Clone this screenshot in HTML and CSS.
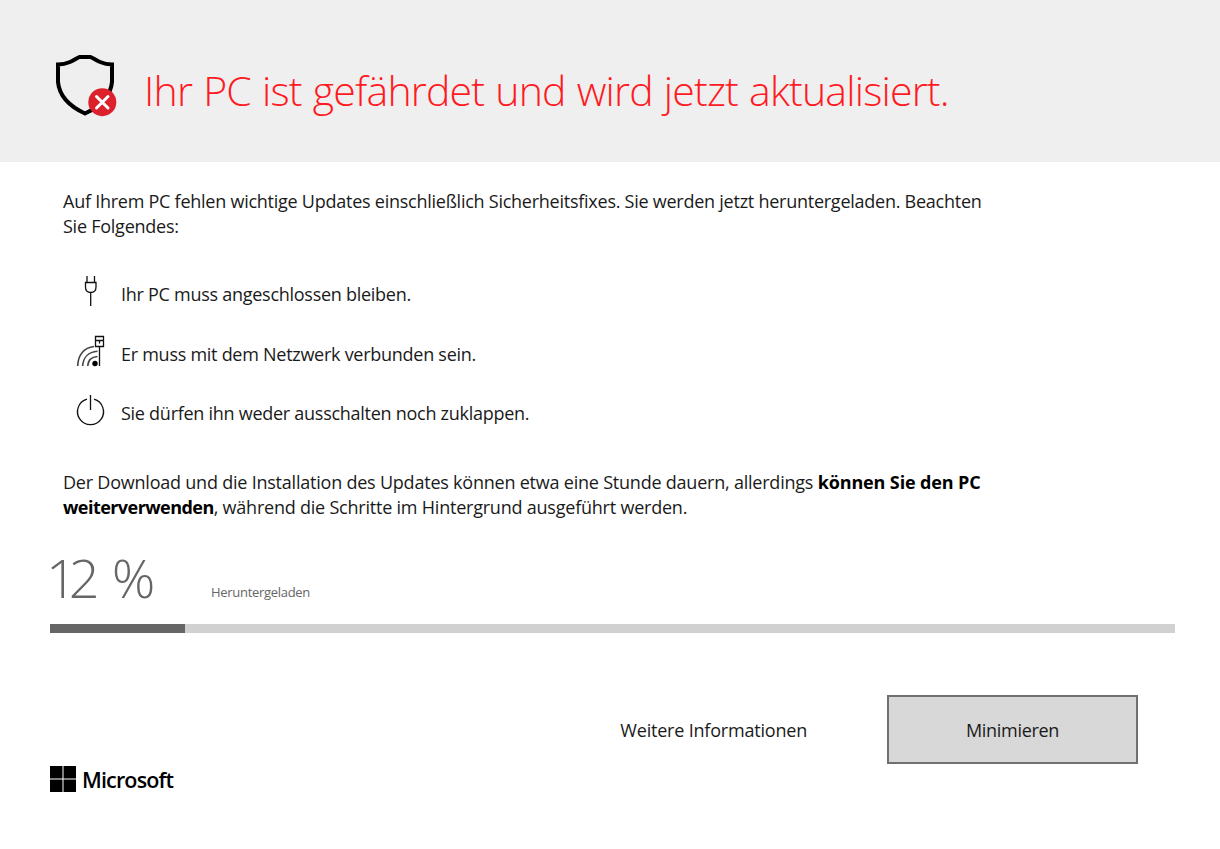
FILE: index.html
```html
<!DOCTYPE html>
<html lang="de">
<head>
    <meta charset="UTF-8">
    <meta name="viewport" content="width=device-width, initial-scale=1.0">
    <title>Windows Update</title>
    <link rel="stylesheet" href="styles.css">
</head>
<body>
    <header class="header">
        <svg class="shield" viewBox="0 0 64 64" width="64" height="64">
            <path d="M26.500 4H37.500C41 5.500 43.500 7.500 47 9C51 10.700 54.500 11.500 59 11.500V29C57.500 45 46 54 32 60.500C18 54 6.500 45 5 29V11.500C9.500 11.500 13 10.700 17 9C20.500 7.500 23 5.500 26.500 4Z" fill="none" stroke="#000" stroke-width="4"/>
            <circle cx="49.300" cy="49.200" r="14" fill="#dc202c"/>
            <path d="M43.500 43.500L55 55M55 43.500L43.500 55" stroke="#fff" stroke-width="3" stroke-linecap="round"/>
        </svg>
        <h1 class="title">Ihr PC ist gefährdet und wird jetzt aktualisiert.</h1>
    </header>

    <main class="content">
        <p class="text intro">Auf Ihrem PC fehlen wichtige Updates einschließlich Sicherheitsfixes. Sie werden jetzt heruntergeladen. Beachten<br>Sie Folgendes:</p>

        <ul class="hints">
            <li class="hint">
                <svg class="hint-icon" viewBox="0 0 32 32" width="32" height="32" fill="none" stroke="#111" stroke-width="1.300">
                    <path d="M12 1V7.500M19.500 1V7.500M10.500 7.500H21V12C21 15.500 19 17.500 15.700 17.500S10.500 15.500 10.500 12ZM15.700 17.500V31"/>
                </svg>
                <span class="hint-text">Ihr PC muss angeschlossen bleiben.</span>
            </li>
            <li class="hint">
                <svg class="hint-icon" viewBox="0 0 32 32" width="32" height="32" fill="none" stroke="#111" stroke-width="1.300">
                    <path d="M2.700 31C3 20 9 12.500 19 11.500M7.700 31C8 22.500 13.500 17 22.500 16.300M12.700 31C13 25.500 16.500 22 22.500 21.500" stroke="#444" stroke-width="1.600"/>
                    <circle cx="20" cy="28.500" r="2.700" fill="#000" stroke="none"/>
                    <path d="M20.500 1.500H28.500V11.500H20.500ZM20.500 5.500H28.500M24.500 5.500V8.500M24.500 11.500V31"/>
                </svg>
                <span class="hint-text">Er muss mit dem Netzwerk verbunden sein.</span>
            </li>
            <li class="hint">
                <svg class="hint-icon" viewBox="0 0 32 32" width="32" height="32" fill="none" stroke="#111" stroke-width="1.300">
                    <path d="M12 5.200A13 13 0 1 0 19 5.200M15.500 1V16"/>
                </svg>
                <span class="hint-text">Sie dürfen ihn weder ausschalten noch zuklappen.</span>
            </li>
        </ul>

        <p class="text duration">Der Download und die Installation des Updates können etwa eine Stunde dauern, allerdings <b>können Sie den PC<br><span class="tight">weiterverwenden</span></b>, während die Schritte im Hintergrund ausgeführt werden.</p>

        <div class="status">
            <span class="percent">12 %</span>
            <span class="status-label">Heruntergeladen</span>
        </div>
        <div class="progress">
            <div class="progress-bar" style="width: 12%"></div>
        </div>

        <div class="actions">
            <a class="more">Weitere Informationen</a>
            <button class="btn">Minimieren</button>
        </div>
    </main>

    <footer class="brand">
        <svg class="brand-logo" viewBox="0 0 26 26" width="26" height="26">
            <path d="M0 0H12.500V12.500H0ZM13.500 0H26V12.500H13.500ZM0 13.500H12.500V26H0ZM13.500 13.500H26V26H13.500Z"/>
        </svg>
        <span class="brand-name">Microsoft</span>
    </footer>
</body>
</html>
```
FILE: styles.css
```css
body {
    margin: 0;
    background-color: #fff;
    color: #1a1a1a;
    font-family: "Segoe UI", "Open Sans", "Noto Sans", sans-serif;
    font-size: 18px;
    line-height: 25px;
    white-space: nowrap;
}

.header {
    display: flex;
    height: 162px;
    padding: 53px 0 0 53px;
    box-sizing: border-box;
    background-color: #efefef;
}

.title {
    margin: 7px 0 0 27px;
    color: #ff1a1f;
    font-size: 41px;
    font-weight: 300;
    line-height: 60px;
    letter-spacing: -0.8px;
    word-spacing: 1.2px;
}

.content {
    height: 604px;
    padding: 27px 45px 0 50px;
    box-sizing: border-box;
}

.text {
    margin: 0 0 0 13px;
    letter-spacing: -0.25px;
}

.text b {
    color: #000;
    letter-spacing: -0.13px;
}

.text .tight {
    letter-spacing: -0.55px;
}

.hints {
    margin: 36px 0 0 25px;
    padding: 0;
    list-style: none;
}

.hint {
    display: flex;
    height: 59.5px;
}

.hint-text {
    margin: 7px 0 0 14px;
    letter-spacing: -0.27px;
}

.duration {
    margin-top: 16px;
    letter-spacing: -0.22px;
}

.status {
    display: flex;
    height: 104px;
    color: #666;
}

.percent {
    width: 165px;
    margin: 27px 0 0 -4px;
    font-size: 54px;
    font-weight: 300;
    line-height: 60px;
    letter-spacing: -8px;
    word-spacing: 14px;
}

.status-label {
    margin-top: 60px;
    font-size: 13px;
    letter-spacing: -0.3px;
}

.progress {
    height: 9px;
    background-color: #d1d1d1;
}

.progress-bar {
    height: 9px;
    background-color: #666;
}

.actions {
    display: flex;
    justify-content: flex-end;
    align-items: center;
    margin: 62px 37px 0 0;
}

.more {
    margin: 2px 80px 0 0;
    letter-spacing: -0.2px;
}

.btn {
    width: 251px;
    height: 69px;
    padding-top: 3px;
    border: 2px solid #707070;
    background-color: #d8d8d8;
    color: #1a1a1a;
    font: inherit;
    letter-spacing: -0.3px;
}

.brand {
    display: flex;
    padding-left: 50px;
    color: #000;
}

.brand-name {
    margin-left: 6px;
    font-size: 21.5px;
    font-weight: 600;
    line-height: 27px;
    letter-spacing: -0.85px;
}
```
